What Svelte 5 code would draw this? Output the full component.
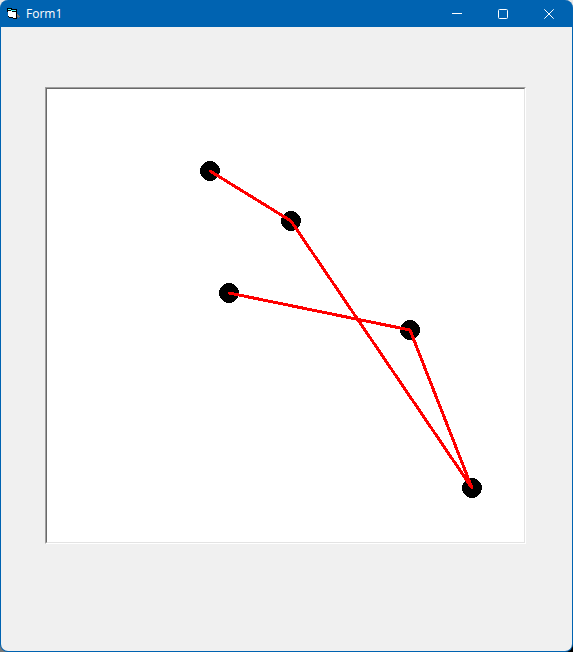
<script>
  const points = [
    { x: 163, y: 82 },
    { x: 244, y: 132 },
    { x: 425, y: 399 },
    { x: 363, y: 241 },
    { x: 182, y: 204 }
  ];
  const path = points.map((p) => `${p.x},${p.y}`).join(' ');
</script>

<main class="window">
  <header class="titlebar">
    <svg class="app-icon" width="13" height="11" viewBox="0 0 13 11" shape-rendering="crispEdges" aria-hidden="true">
      <path d="M0 0h5v1h5v10h-4v-1h-4v-1h-1v-5h-1z" fill="#000" />
      <path d="M1 3h4v1h4v6h-3v-1h-4v-1h-1z" fill="#fff" />
      <path d="M1 1h3v1h-3zM4 2h5v1h-5z" fill="#5ff" />
      <path d="M10 6h1v1h1v1h1v1h-1v1h-1v-1h-1z" fill="#777" />
    </svg>
    <h1>Form1</h1>
    <div class="controls">
      <button aria-label="Minimize">
        <svg width="10" height="10" viewBox="0 0 10 10"><path d="M0 4.5h10" /></svg>
      </button>
      <button aria-label="Maximize">
        <svg width="10" height="10" viewBox="0 0 10 10"><rect x=".5" y=".5" width="9" height="9" rx="1" /></svg>
      </button>
      <button aria-label="Close">
        <svg width="10" height="10" viewBox="0 0 10 10"><path d="M.3.3l9.4 9.4M9.7.3L.3 9.7" /></svg>
      </button>
    </div>
  </header>
  <section class="form">
    <div class="picture">
      <svg viewBox="0 0 477 453" shape-rendering="crispEdges" role="img" aria-label="Points joined by lines">
        {#each points as p}
          <circle cx={p.x} cy={p.y} r="10" />
        {/each}
        <polyline points={path} />
      </svg>
    </div>
  </section>
</main>

<style>
  :global(body) {
    background: linear-gradient(#e8e8e8 20px, transparent 20px), linear-gradient(90deg, #777 50%, #000 50%);
  }
  .window {
    box-sizing: border-box;
    min-height: 100vh;
    display: flex;
    flex-direction: column;
    border: 1px solid #0063b1;
    border-top: 0;
    border-radius: 8px;
    overflow: hidden;
    background: #0063b1;
    font-family: "Open Sans", "Noto Sans", sans-serif;
  }
  .titlebar {
    height: 27px;
    display: flex;
    align-items: center;
    padding-left: 6px;
    color: #fff;
  }
  .app-icon {
    flex: none;
  }
  h1 {
    flex: 1;
    margin: 0 0 0 6px;
    font-size: 12px;
    line-height: 16px;
    font-weight: 400;
  }
  .controls {
    display: flex;
    align-self: stretch;
  }
  button {
    width: 46px;
    padding: 0;
    border: 0;
    background: none;
    color: #fff;
    display: flex;
    align-items: center;
    justify-content: center;
  }
  button svg {
    fill: none;
    stroke: currentColor;
  }
  .form {
    flex: 1;
    padding: 60px 46px 60px 44px;
    background: #f0f0f0;
  }
  .picture {
    border: 1px solid;
    border-color: #a0a0a0 #fff #fff #a0a0a0;
  }
  .picture svg {
    display: block;
    box-sizing: border-box;
    width: 100%;
    border: 1px solid;
    border-color: #696969 #e3e3e3 #e3e3e3 #696969;
    background: #fff;
  }
  polyline {
    fill: none;
    stroke: #f00;
    stroke-width: 3;
    stroke-linecap: round;
    stroke-linejoin: round;
  }
</style>
